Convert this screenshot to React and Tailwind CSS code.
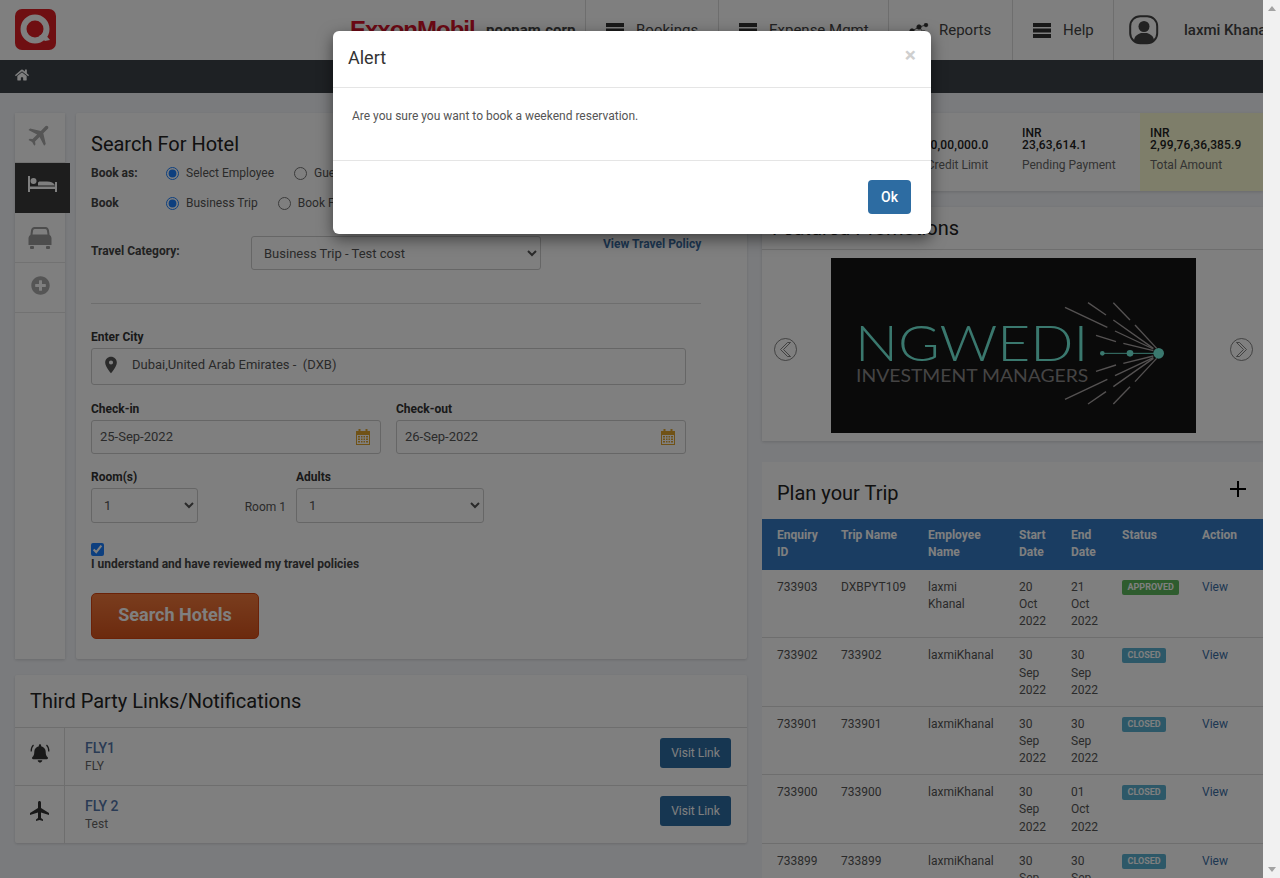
import { FaBell, FaHome, FaPlusCircle } from "react-icons/fa";
import { MdFlight, MdPlace } from "react-icons/md";

const trips = [
  { id: "733903", name: "DXBPYT109", emp: "laxmi Khanal", start: "20 Oct 2022", end: "21 Oct 2022", status: "APPROVED" },
  { id: "733902", name: "733902", emp: "laxmiKhanal", start: "30 Sep 2022", end: "30 Sep 2022", status: "CLOSED" },
  { id: "733901", name: "733901", emp: "laxmiKhanal", start: "30 Sep 2022", end: "30 Sep 2022", status: "CLOSED" },
  { id: "733900", name: "733900", emp: "laxmiKhanal", start: "30 Sep 2022", end: "01 Oct 2022", status: "CLOSED" },
  { id: "733899", name: "733899", emp: "laxmiKhanal", start: "30 Sep 2022", end: "30 Sep 2022", status: "CLOSED" },
];

function Bars() {
  return (
    <svg width="18" height="15" viewBox="0 0 18 15" className="shrink-0 fill-[#333]">
      <rect width="18" height="4" />
      <rect y="5.5" width="18" height="4" />
      <rect y="11" width="18" height="4" />
    </svg>
  );
}

function CalendarIcon() {
  return (
    <svg width="14" height="16" viewBox="0 0 14 16" className="fill-[#e0a52c]">
      <rect x="2.5" y="0" width="2" height="3" />
      <rect x="9.5" y="0" width="2" height="3" />
      <path d="M0 2h14v14H0z M1 6v9h12V6z" fillRule="evenodd" />
      <path d="M2 7h2v1.5H2zM5 7h1.5v1.5H5zM7.5 7H9v1.5H7.5zM10 7h2v1.5h-2zM2 9.5h2V11H2zM5 9.5h1.5V11H5zM7.5 9.5H9V11H7.5zM10 9.5h2V11h-2zM2 12h2v1.5H2zM5 12h1.5v1.5H5zM7.5 12H9v1.5H7.5zM10 12h2v1.5h-2z" />
    </svg>
  );
}

function CarIcon() {
  return (
    <svg width="24" height="24" viewBox="0 0 24 24" className="fill-[#9a9a9a]">
      <path fillRule="evenodd" d="M6.5 1h11C19.5 1 20.6 2.5 21 4.500L21.600 9c1 .6 1.900 1.800 1.900 3.200V19H.5v-6.800C.5 10.800 1.400 9.600 2.400 9L3 4.500C3.400 2.500 4.500 1 6.500 1zM6.700 3C5.700 3 5.200 3.800 5 5l-.5 3.500h15L19 5c-.2-1.200-.7-2-1.700-2z" />
      <rect x="2" y="20" width="4" height="3" rx="1" />
      <rect x="18" y="20" width="4" height="3" rx="1" />
    </svg>
  );
}

function BedIcon() {
  return (
    <svg width="29" height="16" viewBox="0 0 29 16" className="fill-white">
      <rect width="2" height="16" />
      <rect x="27" y="6" width="2" height="10" />
      <rect y="10.500" width="29" height="2.500" />
      <circle cx="5.500" cy="5" r="3" />
      <path d="M10 9.500V7c0-1 1-1.500 2-1.500h7c4 0 7 1.500 8 4z" />
    </svg>
  );
}

function RingingBell() {
  return (
    <svg width="20" height="21" viewBox="0 0 20 21" fill="none" className="stroke-[#333]">
      <path d="M3.500 2C1.500 4 1 6 1.200 8.500" strokeWidth="1.200" />
      <path d="M16.500 2C18.500 4 19 6 18.800 8.500" strokeWidth="1.200" />
      <foreignObject x="2" y="1" width="16" height="20">
        <FaBell className="h-[19px] w-[16px] text-[#333]" />
      </foreignObject>
    </svg>
  );
}

function Arrow({ flip }) {
  return (
    <svg width="23" height="23" viewBox="0 0 23 23" fill="none" stroke="#666" strokeWidth="0.8" className={`mt-[8px] ${flip ? "-scale-x-100" : ""}`}>
      <circle cx="11.500" cy="11.500" r="11" />
      <path d="M13.500 4.500 L6.500 11.500 L13.500 18.500 L16.500 18.500 L9.500 11.500 L16.500 4.500 Z" strokeLinejoin="round" />
    </svg>
  );
}

function PromoLogo() {
  const lines = [
    [915, 172, 1042, 232],
    [984, 158, 1038, 195],
    [1060, 158, 1110, 210],
    [1060, 210, 1180, 295],
    [1125, 225, 1190, 295],
    [1065, 243, 1180, 297],
    [1008, 256, 1068, 275],
    [1090, 280, 1180, 302],
  ];
  return (
    <svg width="365" height="175" viewBox="213 24 1095 525" className="shrink-0 bg-[#141414]">
      {lines.map(([a, b, c, d]) => (
        <g key={`${a}-${b}`} stroke="#aaa4a4" strokeWidth="4">
          <line x1={a} y1={b} x2={c} y2={d} />
          <line x1={a} y1={620 - b} x2={c} y2={620 - d} />
        </g>
      ))}
      <line x1="1027" y1="310" x2="1196" y2="310" stroke="#74f0dc" strokeWidth="3" />
      <circle cx="1027" cy="310" r="7" fill="#74f0dc" />
      <circle cx="1110" cy="310" r="10" fill="#74f0dc" />
      <circle cx="1196" cy="310" r="16" fill="#74f0dc" />
      <text x="285" y="334" textLength="700" lengthAdjust="spacingAndGlyphs" fontFamily="Lato" fontSize="150" fontWeight="300" fill="#74f0dc">NGWEDI</text>
      <text x="288" y="396" textLength="697" lengthAdjust="spacingAndGlyphs" fontFamily="Lato" fontSize="53" fontWeight="400" fill="#8a8888">INVESTMENT MANAGERS</text>
    </svg>
  );
}

function NavItem({ children, label, className }) {
  return (
    <div className={`flex h-full items-center border-l border-[#ddd] ${className}`}>
      {children}
      <span className="text-[15px] text-[#444]">{label}</span>
    </div>
  );
}

function Header() {
  return (
    <header className="flex h-[60px] items-center bg-white">
      <svg width="41" height="41" viewBox="0 0 41 41" className="mb-[2px] ml-[15px] shrink-0">
        <rect width="41" height="41" rx="7" fill="#de1e24" />
        <circle cx="20" cy="20" r="11.500" fill="none" stroke="#fff" strokeWidth="6" />
        <path d="M24 27 L29 24 L35 31 L30 32 Z" fill="#fff" />
      </svg>
      <span className="ml-[294px] w-[136px] font-['Liberation_Sans',sans-serif] text-[24px] font-bold tracking-[-1px] text-[#d8132a]">ExxonMobil</span>
      <span className="w-[99px] text-[15px] font-bold text-[#444]">poonam.corp</span>
      <NavItem label="Bookings" className="w-[133px] pl-[20px]">
        <span className="mr-[12px]"><Bars /></span>
      </NavItem>
      <NavItem label="Expense Mgmt" className="w-[170px] pl-[20px]">
        <span className="mr-[12px]"><Bars /></span>
      </NavItem>
      <NavItem label="Reports" className="w-[124px] pl-[20px]">
        <svg width="20" height="15" viewBox="0 0 20 15" className="mr-[10px] fill-[#333] stroke-[#333]" strokeWidth="0.8">
          <path d="M3 8 L10 4 L17 2 M10 4 L15 10 L3 8" fill="none" />
          <circle cx="3" cy="8" r="2.200" />
          <circle cx="10" cy="4" r="2.200" />
          <circle cx="17" cy="2" r="1.800" />
          <circle cx="15" cy="10" r="2.200" />
        </svg>
      </NavItem>
      <NavItem label="Help" className="w-[101px] pl-[20px]">
        <span className="mr-[12px]"><Bars /></span>
      </NavItem>
      <div className="flex h-full min-w-0 flex-1 items-center overflow-hidden border-l border-[#ddd] pl-[15px]">
        <svg width="30" height="30" viewBox="0 0 30 30" className="shrink-0">
          <rect x="1.200" y="1.200" width="27" height="27" rx="10" fill="none" stroke="#444" strokeWidth="2" />
          <circle cx="15" cy="11.500" r="5.500" fill="#444" />
          <path d="M5 26c0-5 4-7 7-8h6c3 1 7 3 7 8-2 2-6 3-10 3s-8-1-10-3z" fill="#444" />
        </svg>
        <span className="ml-[25px] text-[15px] font-medium whitespace-nowrap text-[#444]">laxmi Khanal</span>
      </div>
    </header>
  );
}

function SideTabs() {
  return (
    <div className="relative w-[50px] shrink-0 bg-white shadow-[0_1px_3px_rgba(0,0,0,0.15)]">
      <div className="flex h-[50px] items-center justify-center border-b border-[#e5e5e5] pb-[5px]">
        <MdFlight className="rotate-45 text-[28px] text-[#aaa]" />
      </div>
      <div className="flex h-[50px] w-[55px] items-center justify-center bg-[#3a3a3a] pb-[8px]">
        <BedIcon />
      </div>
      <div className="flex h-[50px] items-center justify-center border-b border-[#e5e5e5]">
        <CarIcon />
      </div>
      <div className="flex h-[50px] items-center justify-center border-b border-[#e5e5e5] pb-[4px]">
        <FaPlusCircle className="text-[19px] text-[#aaa]" />
      </div>
    </div>
  );
}

function Radio({ label, checked, className }) {
  return (
    <label className={`flex items-center text-[12px] text-[#555] ${className}`}>
      <input type="radio" readOnly checked={checked} className="m-0 h-[13px] w-[13px] accent-[#1a7fff]" />
      <span className="ml-[7px] whitespace-nowrap">{label}</span>
    </label>
  );
}

function DateBox({ label, value }) {
  return (
    <div>
      <div className="text-[12px] leading-[17px] font-bold text-[#333]">{label}</div>
      <div className="mt-[2px] flex h-[34px] items-center justify-between rounded-[3px] border border-[#ccc] pr-[10px] pl-[8px] text-[13px] text-[#555]">
        {value}
        <CalendarIcon />
      </div>
    </div>
  );
}

function SearchForm() {
  return (
    <section className="ml-[11px] h-[546px] flex-1 rounded-[2px] bg-white pt-[19px] pl-[15px] shadow-[0_1px_3px_rgba(0,0,0,0.15)]">
      <h2 className="text-[20px] leading-6 text-[#222]">Search For Hotel</h2>
      <div className="mt-[7px] flex h-[20px] items-center">
        <span className="w-[75px] text-[12px] font-bold text-[#444]">Book as:</span>
        <Radio label="Select Employee" checked />
        <Radio label="Guest" className="ml-[20px]" />
      </div>
      <div className="mt-[10px] flex h-[20px] items-center">
        <span className="w-[75px] text-[12px] font-bold text-[#444]">Book</span>
        <Radio label="Business Trip" checked />
        <Radio label="Book For Others" className="ml-[20px]" />
      </div>
      <div className="mt-[23px] flex items-start">
        <span className="w-[160px] pt-[7px] text-[12px] leading-[17px] font-bold text-[#444]">Travel Category:</span>
        <select defaultValue="a" className="h-[34px] w-[290px] rounded-[3px] border border-[#ccc] px-[8px] text-[13px] text-[#555]">
          <option value="a">Business Trip - Test cost</option>
        </select>
        <a className="ml-[62px] text-[12px] leading-[17px] font-bold text-[#3b6ea5]">View Travel Policy</a>
      </div>
      <hr className="mt-[33px] w-[610px] border-[#ddd]" />
      <div className="w-[595px]">
        <div className="mt-[25px] text-[12px] leading-[17px] font-bold text-[#333]">Enter City</div>
        <div className="mt-[2px] flex h-[37px] items-center rounded-[3px] border border-[#ccc] pb-[3px] pl-[9px] text-[13px] text-[#555]">
          <MdPlace className="text-[20px] text-[#555]" />
          <span className="ml-[11px] whitespace-pre">Dubai,United Arab Emirates -  (DXB)</span>
        </div>
        <div className="mt-[16px] grid grid-cols-2 gap-[15px]">
          <DateBox label="Check-in" value="25-Sep-2022" />
          <DateBox label="Check-out" value="26-Sep-2022" />
        </div>
        <div className="mt-[15px] flex items-end">
          <div className="w-[107px]">
            <div className="text-[12px] leading-[17px] font-bold text-[#333]">Room(s)</div>
            <select defaultValue="1" className="mt-[2px] h-[35px] w-[107px] rounded-[3px] border border-[#ccc] px-[8px] text-[13px] text-[#555]">
              <option value="1">1</option>
            </select>
          </div>
          <div className="w-[98px] pr-[10px] pb-[7px] text-right text-[12px] leading-[17px] text-[#555]">Room 1</div>
          <div className="w-[188px]">
            <div className="text-[12px] leading-[17px] font-bold text-[#333]">Adults</div>
            <select defaultValue="1" className="mt-[2px] h-[35px] w-[188px] rounded-[3px] border border-[#ccc] px-[8px] text-[13px] text-[#555]">
              <option value="1">1</option>
            </select>
          </div>
        </div>
        <input type="checkbox" readOnly checked className="mt-[20px] block h-[13px] w-[13px] accent-[#1a7fff]" />
        <div className="text-[12px] leading-[17px] font-bold text-[#444]">I understand and have reviewed my travel policies</div>
        <button className="mt-[20px] h-[46px] w-[168px] rounded-[5px] border border-[#d64410] bg-gradient-to-b from-[#f47a3c] to-[#d8541c] pb-[3px] text-[18px] font-bold text-white">
          Search Hotels
        </button>
      </div>
    </section>
  );
}

function LinkRow({ icon, title, sub }) {
  return (
    <div className="flex h-[58px] border-t border-[#ddd]">
      <div className="flex w-[50px] shrink-0 items-center justify-center border-r border-[#ddd] pb-[7px] text-[#333]">{icon}</div>
      <div className="flex-1 pt-[12px] pl-[20px]">
        <div className="text-[14px] leading-[17px] font-medium text-[#5577aa]">{title}</div>
        <div className="mt-[1px] text-[12px] leading-[17px] text-[#666]">{sub}</div>
      </div>
      <div className="pt-[10px] pr-[16px]">
        <button className="h-[30px] w-[71px] rounded-[3px] bg-[#2d6ca2] text-[12px] text-white">Visit Link</button>
      </div>
    </div>
  );
}

function ThirdPartyLinks() {
  return (
    <section className="mt-[16px] rounded-[2px] bg-white shadow-[0_1px_3px_rgba(0,0,0,0.15)]">
      <h2 className="flex h-[52px] items-center pl-[15px] text-[20px] text-[#222]">Third Party Links/Notifications</h2>
      <LinkRow title="FLY1" sub="FLY" icon={<RingingBell />} />
      <LinkRow title="FLY 2" sub="Test" icon={<MdFlight className="text-[24px]" />} />
    </section>
  );
}

function Stat({ value, label, className }) {
  return (
    <div className={`h-full pt-[14px] pl-[10px] ${className}`}>
      <div className="text-[12px] leading-[12px] font-medium text-[#222]">INR</div>
      <div className="text-[12px] leading-[12px] font-medium tracking-[0.15px] text-[#222]">{value}</div>
      <div className="mt-[6px] text-[12px] leading-[17px] text-[#666]">{label}</div>
    </div>
  );
}

function TripTable() {
  const cols = "grid grid-cols-[64px_87px_91px_52px_51px_80px_61px] pl-[15px]";
  return (
    <div>
      <div className={`${cols} h-[51px] bg-[#347bc5] py-[8px] text-[12px] leading-[17px] font-bold text-white`}>
        <span>Enquiry<br />ID</span>
        <span>Trip Name</span>
        <span>Employee<br />Name</span>
        <span>Start<br />Date</span>
        <span>End<br />Date</span>
        <span>Status</span>
        <span>Action</span>
      </div>
      {trips.map((t) => (
        <div key={t.id} className={`${cols} border-b border-[#ddd] pt-[9px] pb-[7px] text-[12px] leading-[1.42857] text-[#555]`}>
          <span>{t.id}</span>
          <span>{t.name}</span>
          <span className={t.emp.includes(" ") ? "w-min" : ""}>{t.emp}</span>
          <span className="w-min">{t.start}</span>
          <span className="w-min">{t.end}</span>
          <span>
            <span className={`mt-[1px] block w-fit rounded-[2px] px-[5.5px] text-[9px] leading-[15px] font-bold text-white ${t.status === "APPROVED" ? "bg-[#5cb85c]" : "bg-[#5bb1d0]"}`}>
              {t.status}
            </span>
          </span>
          <span className="text-[#3b6ea5]">View</span>
        </div>
      ))}
    </div>
  );
}

export default function App() {
  return (
    <div className="relative flex h-[878px] w-[1280px] overflow-hidden font-[Roboto,sans-serif]">
      <div className="w-[1263px] shrink-0 overflow-hidden bg-[#f5f7fb]">
        <Header />
        <div className="flex h-[33px] items-center bg-[#3c4248] pb-[3px] pl-[15px]">
          <FaHome className="text-[14px] text-white" />
        </div>
        <main className="flex pt-[20px] pl-[15px]">
          <div className="w-[732px] shrink-0">
            <div className="flex">
              <SideTabs />
              <SearchForm />
            </div>
            <ThirdPartyLinks />
          </div>
          <div className="ml-[15px] w-[501px] shrink-0">
            <div className="flex h-[78px] bg-white shadow-[0_1px_3px_rgba(0,0,0,0.15)]">
              <div className="w-[125px]" />
              <Stat value="1,00,00,00,000.0" label="Total Credit Limit" className="w-[125px]" />
              <Stat value="23,63,614.1" label="Pending Payment" className="w-[128px]" />
              <Stat value="2,99,76,36,385.9" label="Total Amount" className="flex-1 bg-[#fcfcd4]" />
            </div>
            <section className="mt-[16px] h-[234px] bg-white shadow-[0_1px_3px_rgba(0,0,0,0.15)]">
              <h2 className="flex h-[43px] items-center border-b border-[#ddd] pl-[10px] text-[20px] text-[#222]">Featured Promotions</h2>
              <div className="mt-[8px] flex items-center pl-[12px]">
                <Arrow />
                <div className="mx-[34px]"><PromoLogo /></div>
                <Arrow flip />
              </div>
            </section>
            <section className="mt-[21px] bg-white">
              <div className="flex h-[57px] items-center justify-between pr-[16px] pl-[15px]">
                <h2 className="pt-[5px] text-[20px] text-[#222]">Plan your Trip</h2>
                <svg width="18" height="18" viewBox="0 0 18 18" className="mb-[4px] stroke-black" strokeWidth="2">
                  <path d="M9 1v16M1 9h16" />
                </svg>
              </div>
              <TripTable />
            </section>
          </div>
        </main>
      </div>
      <div className="flex w-[17px] shrink-0 flex-col items-center justify-between bg-[#f1f1f1] py-[6px]">
        <span className="h-0 w-0 border-x-[4px] border-b-[5px] border-x-transparent border-b-[#a3a3a3]" />
        <span className="h-0 w-0 border-x-[4px] border-t-[5px] border-x-transparent border-t-[#a3a3a3]" />
      </div>
      <div className="absolute top-0 left-0 h-full w-[1263px] bg-black/50" />
      <div className="absolute top-[31px] left-[333px] h-[203px] w-[598px] rounded-[6px] bg-white shadow-[0_5px_15px_rgba(0,0,0,0.5)]">
        <div className="relative h-[57px] border-b border-[#e5e5e5] pt-[14px] pl-[15px] text-[18px] leading-[25px] text-[#333]">
          Alert
          <span className="absolute top-[14px] right-[15px] text-[21px] leading-[21px] font-bold text-[#cfcfcf]">×</span>
        </div>
        <div className="h-[73px] border-b border-[#e5e5e5] pt-[20px] pl-[19px] text-[12px] leading-[17px] text-[#555]">
          Are you sure you want to book a weekend reservation.
        </div>
        <div className="flex justify-end pt-[19px] pr-[20px]">
          <button className="h-[34px] w-[43px] rounded-[4px] bg-[#2d6ca2] text-[14px] font-medium text-white">Ok</button>
        </div>
      </div>
    </div>
  );
}
